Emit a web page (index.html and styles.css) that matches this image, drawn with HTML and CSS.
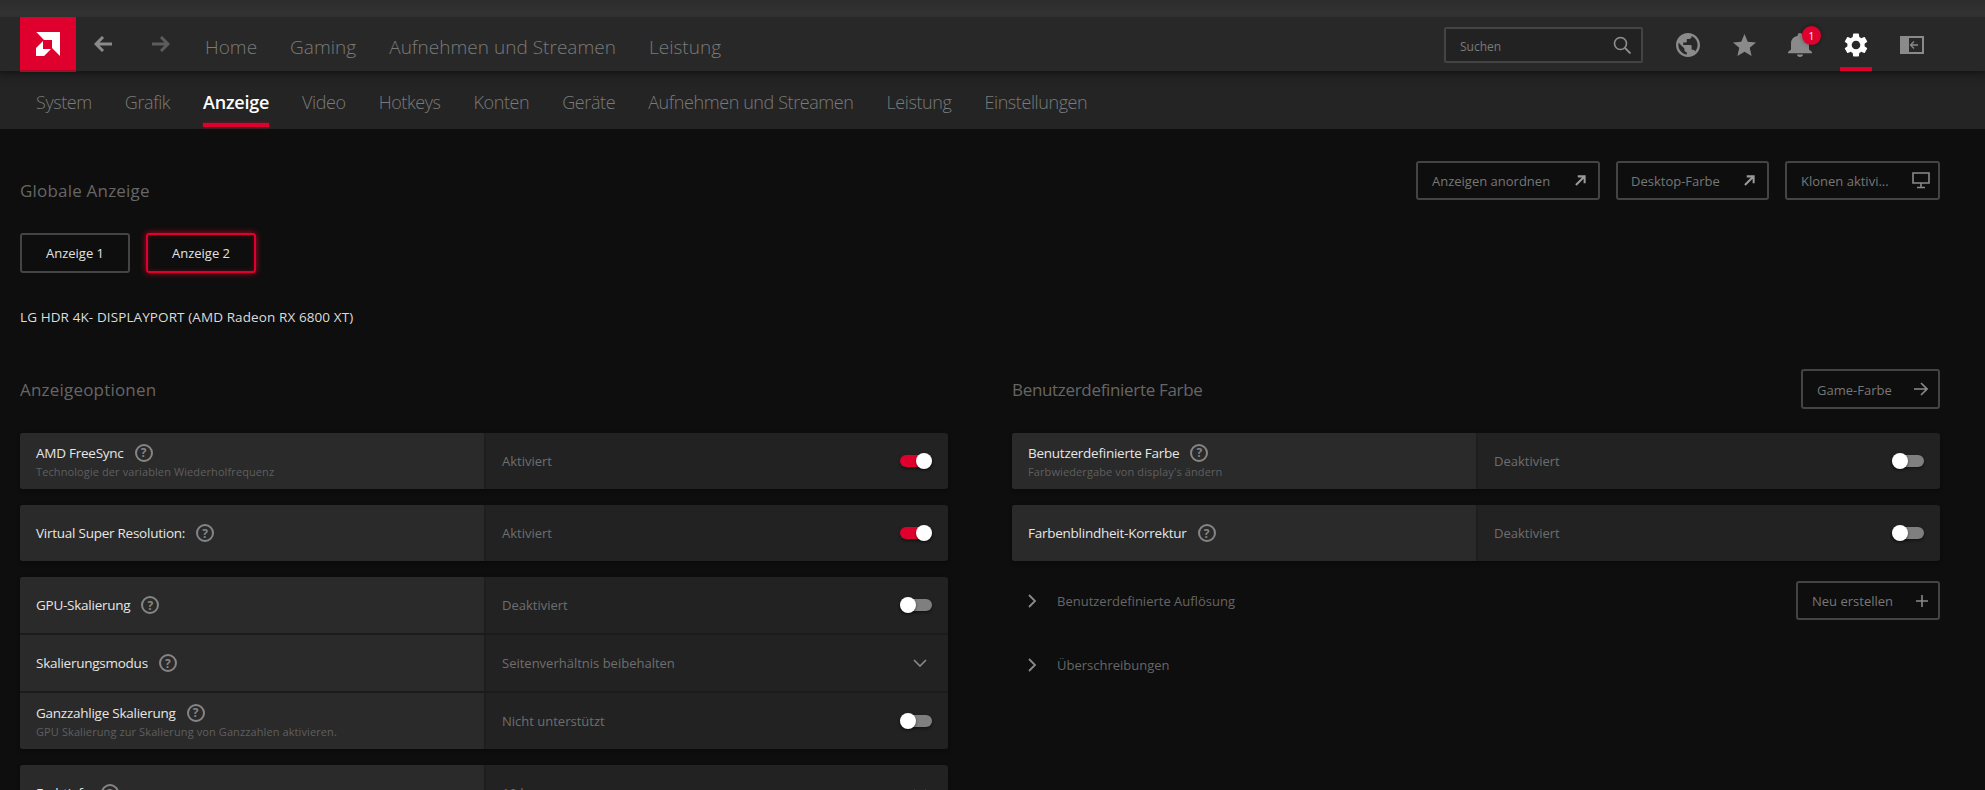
FILE: index.html
```html
<!DOCTYPE html>
<html lang="de">
<head>
<meta charset="utf-8">
<title>AMD Software</title>
<link rel="stylesheet" href="styles.css">
</head>
<body>
<svg class="defs" aria-hidden="true">
  <symbol id="tog-chev" viewBox="0 0 14 8"><path d="M1 1l6 6 6-6" fill="none" stroke="currentColor" stroke-width="1.6"/></symbol>
  <symbol id="chev-right" viewBox="0 0 9 14"><path d="M1 1l6 6-6 6" fill="none" stroke="currentColor" stroke-width="1.8"/></symbol>
  <symbol id="ext" viewBox="0 0 12 12"><path d="M1 11L10 2M3 1.5h7.500V9" fill="none" stroke="currentColor" stroke-width="2.200"/></symbol>
</svg>
<header class="titlebar"></header>
<nav class="topnav">
  <div class="logo">
    <svg class="logo-mark" viewBox="0 0 24 24"><path d="M.3 0H24V24L16 16V8H8Z M7 9L0 16V24H8L15 17H7Z" fill="#fff"/></svg>
  </div>
  <button class="nav-arrow"><svg viewBox="0 0 18 16"><path d="M9 1L2 8l7 7M2 8h16" fill="none" stroke="currentColor" stroke-width="3"/></svg></button>
  <button class="nav-arrow dim"><svg viewBox="0 0 18 16"><path d="M9 1l7 7-7 7M16 8H0" fill="none" stroke="currentColor" stroke-width="3"/></svg></button>
  <ul class="main-links">
    <li>Home</li>
    <li>Gaming</li>
    <li>Aufnehmen und Streamen</li>
    <li>Leistung</li>
  </ul>
  <div class="search">
    <span>Suchen</span>
    <svg viewBox="0 0 18 18"><circle cx="7.500" cy="7.500" r="6" fill="none" stroke="currentColor" stroke-width="1.600"/><path d="M12 12l5.500 5.500" stroke="currentColor" stroke-width="1.800"/></svg>
  </div>
  <div class="tools">
    <span class="tool"><svg viewBox="2 2 20 20"><path fill="currentColor" d="M12 2C6.480 2 2 6.480 2 12s4.480 10 10 10 10-4.480 10-10S17.520 2 12 2zm-1 17.930c-3.950-.49-7-3.850-7-7.930 0-.62.08-1.210.21-1.790L9 15v1c0 1.100.9 2 2 2v1.930zm6.900-2.540c-.26-.81-1-1.390-1.900-1.390h-1v-3c0-.55-.45-1-1-1H8v-2h2c.55 0 1-.45 1-1V7h2c1.100 0 2-.9 2-2v-.41c2.930 1.190 5 4.060 5 7.410 0 2.080-.8 3.970-2.100 5.390z"/></svg></span>
    <span class="tool"><svg class="star" viewBox="2 2 20 19"><path fill="currentColor" d="M12 17.270L18.180 21l-1.640-7.030L22 9.240l-7.190-.61L12 2 9.190 8.630 2 9.240l5.460 4.730L5.820 21z"/></svg></span>
    <span class="tool bell"><svg viewBox="4 2.500 16 19.500" preserveAspectRatio="none"><path fill="currentColor" d="M12 22c1.100 0 2-.9 2-2h-4c0 1.100.89 2 2 2zm6-6v-5c0-3.070-1.640-5.640-4.500-6.320V4c0-.83-.67-1.500-1.500-1.500s-1.500.67-1.500 1.500v.68C7.630 5.360 6 7.920 6 11v5l-2 2v1h16v-1l-2-2z"/></svg><b class="badge">1</b></span>
    <span class="tool active"><svg viewBox="2.400 2 19.200 20"><path fill="currentColor" d="M19.140 12.940c.04-.3.06-.61.06-.94 0-.32-.02-.64-.07-.94l2.030-1.580c.18-.14.23-.41.12-.61l-1.920-3.320c-.12-.22-.37-.29-.59-.22l-2.390.96c-.5-.38-1.030-.7-1.620-.94l-.36-2.540c-.04-.24-.24-.41-.48-.41h-3.840c-.24 0-.43.17-.47.41l-.36 2.540c-.59.24-1.130.57-1.620.94l-2.390-.96c-.22-.08-.47 0-.59.22L2.740 8.870c-.12.21-.08.47.12.61l2.030 1.580c-.05.3-.09.63-.09.94s.02.64.07.94l-2.030 1.580c-.18.14-.23.41-.12.61l1.920 3.320c.12.22.37.29.59.22l2.390-.96c.5.38 1.030.7 1.620.94l.36 2.540c.05.24.24.41.48.41h3.840c.24 0 .44-.17.47-.41l.36-2.540c.59-.24 1.130-.56 1.620-.94l2.390.96c.22.08.47 0 .59-.22l1.920-3.320c.12-.22.07-.47-.12-.61l-2.010-1.580zM12 15.600c-1.980 0-3.600-1.620-3.600-3.600s1.620-3.600 3.600-3.600 3.600 1.620 3.600 3.600-1.620 3.600-3.600 3.600z"/></svg></span>
    <span class="tool"><svg class="panel" viewBox="0 0 24 18"><path fill="currentColor" fill-rule="evenodd" d="M0 0H24V18H0ZM9 2V8H22V2ZM9 10V16H22V10Z"/><path d="M9 8h13v2H9z" fill="#282828"/><path d="M18 9H11M14 5.500L10.500 9l3.500 3.500" fill="none" stroke="currentColor" stroke-width="1.300"/></svg></span>
  </div>
</nav>
<nav class="subnav">
  <span>System</span>
  <span>Grafik</span>
  <span class="current">Anzeige</span>
  <span>Video</span>
  <span>Hotkeys</span>
  <span>Konten</span>
  <span>Geräte</span>
  <span>Aufnehmen und Streamen</span>
  <span>Leistung</span>
  <span>Einstellungen</span>
</nav>
<main class="page">
  <section class="global-head">
    <h2 class="short">Globale Anzeige</h2>
    <div class="actions">
      <button class="btn w-arrange"><span>Anzeigen anordnen</span><svg class="ic-ext"><use href="#ext"/></svg></button>
      <button class="btn w-color"><span>Desktop-Farbe</span><svg class="ic-ext"><use href="#ext"/></svg></button>
      <button class="btn w-clone"><span>Klonen aktivi...</span><svg class="ic-monitor" viewBox="0 0 18 17"><path d="M1 1h16v10H1zM9 11v4M5 15.500h8" fill="none" stroke="currentColor" stroke-width="1.600"/></svg></button>
    </div>
  </section>
  <div class="display-tabs">
    <button class="tab">Anzeige 1</button>
    <button class="tab selected">Anzeige 2</button>
  </div>
  <p class="monitor">LG HDR 4K- DISPLAYPORT (AMD Radeon RX 6800 XT)</p>
  <div class="columns">
    <section class="col">
      <div class="col-head"><h2 class="short">Anzeigeoptionen</h2></div>
      <div class="group">
        <div class="row">
          <div class="label"><div class="name">AMD FreeSync <i class="help">?</i></div><small>Technologie der variablen Wiederholfrequenz</small></div>
          <div class="value"><span>Aktiviert</span><span class="toggle on"></span></div>
        </div>
      </div>
      <div class="group">
        <div class="row">
          <div class="label"><div class="name">Virtual Super Resolution: <i class="help">?</i></div></div>
          <div class="value"><span>Aktiviert</span><span class="toggle on"></span></div>
        </div>
      </div>
      <div class="group">
        <div class="row">
          <div class="label"><div class="name">GPU-Skalierung <i class="help">?</i></div></div>
          <div class="value"><span>Deaktiviert</span><span class="toggle"></span></div>
        </div>
        <div class="row">
          <div class="label"><div class="name">Skalierungsmodus <i class="help">?</i></div></div>
          <div class="value"><span>Seitenverhältnis beibehalten</span><svg class="ic-drop"><use href="#tog-chev"/></svg></div>
        </div>
        <div class="row">
          <div class="label"><div class="name">Ganzzahlige Skalierung <i class="help">?</i></div><small>GPU Skalierung zur Skalierung von Ganzzahlen aktivieren.</small></div>
          <div class="value"><span>Nicht unterstützt</span><span class="toggle"></span></div>
        </div>
      </div>
      <div class="group">
        <div class="row">
          <div class="label"><div class="name">Farbtiefe <i class="help">?</i></div></div>
          <div class="value"><span>10 bpc</span><svg class="ic-drop"><use href="#tog-chev"/></svg></div>
        </div>
      </div>
    </section>
    <section class="col">
      <div class="col-head">
        <h2>Benutzerdefinierte Farbe</h2>
        <button class="btn w-game"><span>Game-Farbe</span><svg class="ic-arrow" viewBox="0 0 14 14"><path d="M7 1l6 6-6 6M13 7H0" fill="none" stroke="currentColor" stroke-width="1.600"/></svg></button>
      </div>
      <div class="group">
        <div class="row">
          <div class="label"><div class="name">Benutzerdefinierte Farbe <i class="help">?</i></div><small>Farbwiedergabe von display's ändern</small></div>
          <div class="value"><span>Deaktiviert</span><span class="toggle"></span></div>
        </div>
      </div>
      <div class="group">
        <div class="row">
          <div class="label"><div class="name">Farbenblindheit-Korrektur <i class="help">?</i></div></div>
          <div class="value"><span>Deaktiviert</span><span class="toggle"></span></div>
        </div>
      </div>
      <div class="expander first">
        <svg class="ic-chev"><use href="#chev-right"/></svg>
        <span class="exp-title">Benutzerdefinierte Auflösung</span>
        <button class="btn w-new"><span>Neu erstellen</span><svg class="ic-plus" viewBox="0 0 12 12"><path d="M6 0v12M0 6h12" stroke="currentColor" stroke-width="1.600"/></svg></button>
      </div>
      <div class="expander">
        <svg class="ic-chev"><use href="#chev-right"/></svg>
        <span class="exp-title">Überschreibungen</span>
      </div>
    </section>
  </div>
</main>
</body>
</html>
```

FILE: styles.css
```css
* { box-sizing: border-box; }
html, body { height: 790px; overflow: hidden; }
body {
  margin: 0;
  background: #0e0e0e;
  color: #6e6e6e;
  font-family: "Open Sans", "Noto Sans", "Liberation Sans", sans-serif;
}
.defs { position: absolute; width: 0; height: 0; }
button { font: inherit; background: none; border: 0; padding: 0; color: inherit; }
ul { list-style: none; margin: 0; padding: 0; }
h2 { margin: 0; font-size: 17px; font-weight: 400; color: #666; letter-spacing: -.32px; }
h2.short { letter-spacing: .2px; }

.titlebar { height: 17px; background: linear-gradient(#2c2c2c, #343434); }

.topnav {
  position: relative;
  z-index: 2;
  height: 54px;
  padding-left: 20px;
  display: flex;
  align-items: center;
  background: #282828;
  box-shadow: 0 2px 5px rgba(0,0,0,.35);
}
.logo {
  width: 56px;
  height: 55px;
  align-self: flex-start;
  display: flex;
  align-items: flex-start;
  justify-content: center;
  padding-top: 15px;
  background: #e0002d;
  border-bottom: 2px solid #a80a28;
}
.logo-mark { width: 24px; height: 24px; }
.nav-arrow { width: 18px; height: 16px; margin-left: 18px; color: #8a8a8a; display: flex; }
.nav-arrow + .nav-arrow { margin-left: 40px; }
.nav-arrow.dim { color: #5c5c5c; }
.nav-arrow svg { width: 18px; height: 16px; }
.main-links { display: flex; gap: 33px; margin-left: 35px; margin-top: 5px; font-size: 19px; font-weight: 300; color: #7a7a7a; letter-spacing: .02px; }
.search {
  width: 199px;
  height: 36px;
  margin-left: auto;
  margin-top: 2px;
  padding: 0 10px 0 14px;
  display: flex;
  align-items: center;
  justify-content: space-between;
  border: 2px solid #444;
  border-radius: 2px;
  background: #222;
  font-size: 12px;
  color: #7a7a7a;
}
.search span { padding-top: 2px; }
.search svg { width: 18px; height: 18px; color: #8f8f8f; }
.tools { display: flex; margin-left: 17px; margin-right: 45px; }
.tool { position: relative; width: 56px; height: 54px; padding-top: 2px; display: flex; align-items: center; justify-content: center; color: #8a8a8a; }
.tool svg { width: 24px; height: 24px; }
.tool svg.star { width: 23px; height: 22px; }
.tool svg.panel { width: 24px; height: 18px; }
.badge {
  position: absolute;
  left: 30px;
  top: 9px;
  width: 19px;
  height: 19px;
  border-radius: 50%;
  background: #e0002d;
  color: #eee;
  font-size: 11px;
  font-weight: 400;
  line-height: 19px;
  text-align: center;
  box-shadow: 0 0 4px rgba(0,0,0,.4);
}
.tool.active { color: #fff; }
.tool.active::after {
  content: "";
  position: absolute;
  left: 12px;
  right: 12px;
  bottom: 0;
  height: 4px;
  background: #e0002d;
}

.subnav {
  height: 58px;
  padding: 4px 0 0 36px;
  display: flex;
  align-items: center;
  gap: 33px;
  background: linear-gradient(#1f1f1f, #242424 30%);
  font-size: 18px;
  font-weight: 300;
  letter-spacing: -.41px;
  color: #7a7a7a;
}
.subnav .current { position: relative; color: #fff; font-weight: 600; letter-spacing: -.25px; }
.subnav .current::after {
  content: "";
  position: absolute;
  left: 0;
  right: 0;
  bottom: -13px;
  height: 4px;
  background: #e0002d;
  box-shadow: 0 0 4px rgba(224,0,45,.5);
}

.page { padding: 32px 45px 0 20px; }
.global-head { display: flex; align-items: center; justify-content: space-between; height: 39px; }
.global-head h2 { margin-top: 19px; }
.actions { display: flex; gap: 16px; }
.btn {
  height: 39px;
  padding: 0 10px 0 14px;
  display: flex;
  align-items: center;
  justify-content: space-between;
  border: 2px solid #444;
  border-radius: 3px;
  font-size: 13px;
  color: #777;
}
.btn span { padding-top: 1px; }
.w-arrange { width: 184px; }
.w-color { width: 153px; padding-left: 13px; }
.w-clone { width: 155px; }
.w-game { width: 139px; height: 40px; }
.w-new { width: 144px; margin-left: auto; }
.ic-ext { width: 11px; height: 11px; margin-right: 2px; color: #9a9a9a; }
.ic-monitor { width: 18px; height: 17px; margin-right: -2px; color: #8a8a8a; }
.ic-arrow { width: 14px; height: 14px; color: #8a8a8a; }
.ic-plus { width: 12px; height: 12px; color: #8a8a8a; }

.display-tabs { display: flex; gap: 16px; margin-top: 33px; }
.tab {
  width: 110px;
  height: 40px;
  border: 2px solid #444;
  border-radius: 3px;
  font-size: 13px;
  color: #e2e2e2;
}
.tab.selected { border-color: #e0002d; box-shadow: 0 0 6px rgba(224,0,45,.8), inset 0 0 4px rgba(224,0,45,.35); }
.monitor { margin: 34px 0 0; height: 20px; line-height: 20px; font-size: 13.500px; color: #dcdcdc; letter-spacing: .1px; }

.columns { display: grid; grid-template-columns: 928px 928px; gap: 64px; margin-top: 42px; }
.col-head { height: 40px; margin-bottom: 24px; display: flex; align-items: center; justify-content: space-between; }
.col-head h2 { margin-top: 1px; }
.group { margin-bottom: 16px; border-radius: 3px; overflow: hidden; box-shadow: 0 2px 4px rgba(0,0,0,.3); }
.row { height: 56px; display: flex; background: #222; }
.row + .row { height: 58px; border-top: 2px solid #1b1b1b; }
.label { width: 464px; padding: 0 16px; display: flex; flex-direction: column; justify-content: center; background: #2a2a2a; }
.name { display: flex; align-items: center; gap: 11px; font-size: 13.500px; letter-spacing: -.25px; color: #e6e6e6; }
.label small { margin-top: 3px; font-size: 11px; color: #5f5f5f; letter-spacing: .1px; line-height: 14px; }
.help {
  width: 18px;
  height: 18px;
  border: 2px solid #858585;
  border-radius: 50%;
  display: flex;
  align-items: center;
  justify-content: center;
  font-style: normal;
  font-size: 12px;
  font-weight: 700;
  letter-spacing: 0;
  color: #858585;
}
.value {
  flex: 1;
  padding: 0 16px;
  display: flex;
  align-items: center;
  justify-content: space-between;
  border-left: 2px solid #1e1e1e;
  font-size: 13px;
  color: #6e6e6e;
}
.toggle { position: relative; width: 32px; height: 12px; border-radius: 6px; background: #7f7f7f; box-shadow: 0 2px 3px rgba(0,0,0,.4); }
.toggle::after {
  content: "";
  position: absolute;
  left: 0;
  top: -2px;
  width: 16px;
  height: 16px;
  border-radius: 50%;
  background: #fff;
  box-shadow: 0 1px 3px rgba(0,0,0,.5);
}
.toggle.on { background: #e0002d; }
.toggle.on::after { left: 16px; }
.ic-drop { width: 14px; height: 8px; margin-right: 5px; color: #8a8a8a; }

.expander { display: flex; align-items: center; padding-left: 16px; height: 39px; font-size: 13px; color: #666; }
.expander.first { margin-top: 20px; }
.expander + .expander { margin-top: 25px; }
.ic-chev { width: 9px; height: 14px; color: #8a8a8a; margin-right: 20px; }
```
